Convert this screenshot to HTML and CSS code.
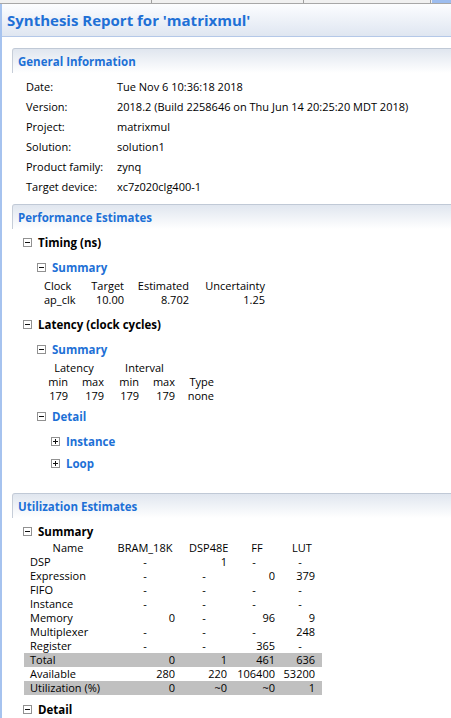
FILE: index.html
```html
<!DOCTYPE html>
<html>
<head>
<meta charset="utf-8">
<link rel="stylesheet" href="styles.css">
</head>
<body>
<div class="tabstrip">
  <span class="tab"></span><span class="tab"></span><span class="tab tab-last"></span><span class="tab-active"></span>
</div>
<div class="page">
  <div class="title">Synthesis Report for 'matrixmul'</div>

  <section class="sec sec-general">
    <div class="sec-head">General Information</div>
    <div class="info">
      <div class="lbl">Date:</div><div>Tue Nov 6 10:36:18 2018</div>
      <div class="lbl">Version:</div><div>2018.2 (Build 2258646 on Thu Jun 14 20:25:20 MDT 2018)</div>
      <div class="lbl">Project:</div><div>matrixmul</div>
      <div class="lbl">Solution:</div><div>solution1</div>
      <div class="lbl">Product family:</div><div>zynq</div>
      <div class="lbl">Target device:</div><div>xc7z020clg400-1</div>
    </div>
  </section>

  <section class="sec sec-perf">
    <div class="sec-head">Performance Estimates</div>
    <div class="node lvl1 first"><span class="tog"></span><span class="nt bold">Timing (ns)</span></div>
    <div class="node lvl2 mt5"><span class="tog"></span><span class="nt blue">Summary</span></div>
    <div class="ttable">
      <div class="l">Clock</div><div>Target</div><div>Estimated</div><div>Uncertainty</div>
      <div class="l">ap_clk</div><div>10.00</div><div>8.702</div><div>1.25</div>
    </div>
    <div class="node lvl1 mt7"><span class="tog"></span><span class="nt bold">Latency (clock cycles)</span></div>
    <div class="node lvl2 mt5"><span class="tog"></span><span class="nt blue">Summary</span></div>
    <div class="ltable">
      <div class="span2 c">Latency</div><div class="span2 c int">Interval</div><div></div>
      <div>min</div><div>max</div><div>min</div><div>max</div><div>Type</div>
      <div>179</div><div>179</div><div>179</div><div>179</div><div>none</div>
    </div>
    <div class="node lvl2 mt3"><span class="tog"></span><span class="nt blue">Detail</span></div>
    <div class="node lvl3 mt5"><span class="tog plus"></span><span class="nt blue">Instance</span></div>
    <div class="node lvl3 mt2"><span class="tog plus"></span><span class="nt blue">Loop</span></div>
  </section>

  <section class="sec sec-util">
    <div class="sec-head">Utilization Estimates</div>
    <div class="node lvl1 first"><span class="tog"></span><span class="nt bold">Summary</span></div>
    <div class="utable">
      <div class="h h1">Name</div><div class="h h2">BRAM_18K</div><div class="h h3">DSP48E</div><div class="h h4">FF</div><div class="h h5">LUT</div>

      <div class="n">DSP</div><div class="d">-</div><div class="v">1</div><div class="d">-</div><div class="d">-</div>
      <div class="n">Expression</div><div class="d">-</div><div class="d">-</div><div class="v">0</div><div class="v">379</div>
      <div class="n">FIFO</div><div class="d">-</div><div class="d">-</div><div class="d">-</div><div class="d">-</div>
      <div class="n">Instance</div><div class="d">-</div><div class="d">-</div><div class="d">-</div><div class="d">-</div>
      <div class="n">Memory</div><div class="v">0</div><div class="d">-</div><div class="v">96</div><div class="v">9</div>
      <div class="n">Multiplexer</div><div class="d">-</div><div class="d">-</div><div class="d">-</div><div class="v">248</div>
      <div class="n">Register</div><div class="d">-</div><div class="d">-</div><div class="v">365</div><div class="d">-</div>

      <div class="n g">Total</div><div class="v g">0</div><div class="v g">1</div><div class="v g">461</div><div class="v g">636</div>
      <div class="n">Available</div><div class="v">280</div><div class="v">220</div><div class="v">106400</div><div class="v">53200</div>
      <div class="n g">Utilization (%)</div><div class="v g">0</div><div class="v g">~0</div><div class="v g">~0</div><div class="v g">1</div>
    </div>
    <div class="node lvl1 mt4"><span class="tog"></span><span class="nt bold">Detail</span></div>
  </section>
</div>
</body>
</html>
```

FILE: styles.css
```css
html, body {
  margin: 0;
  padding: 0;
  background: #ffffff;
  overflow: hidden;
}
body {
  font-family: "Open Sans", "Noto Sans", sans-serif;
  font-size: 11px;
  color: #000;
  height: 718px;
}

.tabstrip {
  display: flex;
  height: 3px;
  background: #f0f0f0;
  border-bottom: 1px solid #a7a7a7;
}
.tab {
  width: 151px;
  border-right: 1px solid #a0a0a0;
  flex: none;
}
.tab-last {
  width: 126px;
}
.tab-active {
  flex: 1;
  background: #9dbdef;
  margin-left: 1px;
}

.page {
  border-left: 2px solid #a6c3ef;
  height: 714px;
}

.title {
  height: 33px;
  box-sizing: border-box;
  border-bottom: 1px solid #b4c8e8;
  background: linear-gradient(#fcfdff, #dfe6f1);
  color: #1f70d6;
  font-weight: bold;
  font-size: 15px;
  padding-left: 5px;
  line-height: 33px;
  margin-bottom: 11px;
}

.sec {
  margin-left: 10px;
}
.sec-perf { margin-top: 8px; }
.sec-util { margin-top: 20px; }

.sec-head {
  height: 25px;
  box-sizing: border-box;
  border-top: 1px solid #c0c9d6;
  border-left: 1px solid #c6cdd8;
  border-top-left-radius: 3px;
  background: linear-gradient(#e0e6ef, #ffffff);
  color: #1d70d6;
  font-weight: bold;
  font-size: 11.5px;
  padding-left: 5px;
  line-height: 25px;
}

.info {
  display: grid;
  grid-template-columns: 91px auto;
  grid-auto-rows: 20px;
  align-items: center;
  padding-left: 14px;
  padding-top: 3px;
}

.node {
  display: flex;
  align-items: center;
  height: 20px;
}
.node.first { margin-top: 3px; }
.lvl1 { padding-left: 11px; }
.lvl2 { padding-left: 25px; }
.lvl3 { padding-left: 39px; }
.mt2 { margin-top: 2px; }
.mt3 { margin-top: 3px; }
.mt4 { margin-top: 4px; }
.mt5 { margin-top: 5px; }
.mt7 { margin-top: 7px; }

.tog {
  position: relative;
  width: 9px;
  height: 9px;
  box-sizing: border-box;
  border: 1px solid #919191;
  background: #fff;
  margin-right: 6px;
  flex: none;
}
.tog::before {
  content: "";
  position: absolute;
  left: 1px;
  right: 1px;
  top: 3px;
  height: 1px;
  background: #111;
}
.tog.plus::after {
  content: "";
  position: absolute;
  top: 1px;
  bottom: 1px;
  left: 3px;
  width: 1px;
  background: #111;
}
.nt { font-size: 11.5px; }
.bold { font-weight: bold; color: #000; }
.blue { font-weight: bold; color: #1d70d6; }

.ttable {
  display: grid;
  grid-template-columns: 36px 44px 65px 76px;
  grid-auto-rows: 14px;
  line-height: 14px;
  margin-top: 2px;
  margin-left: 32px;
  text-align: right;
}
.ttable .l { text-align: left; }

.ltable {
  display: grid;
  grid-template-columns: 24px 36px 35px 36px 39px;
  grid-auto-rows: 14px;
  line-height: 14px;
  margin-top: 2px;
  margin-left: 32px;
  text-align: right;
}
.ltable .span2 { grid-column: span 2; }
.ltable .c { text-align: center; }
.ltable .int { padding-left: 10px; }

.utable {
  display: grid;
  grid-template-columns: 88px 66px 52px 48px 44px;
  grid-auto-rows: 14px;
  line-height: 14px;
  margin-left: 12px;
  width: 298px;
}
.utable .h { text-align: center; white-space: nowrap; }
.utable .h3 { text-align: left; padding-left: 11px; }
.utable .h4 { padding-left: 6px; }
.utable .h5 { padding-left: 4px; }
.utable .n { padding-left: 6px; white-space: nowrap; }
.utable .d { text-align: center; }
.utable .v { text-align: right; padding-right: 3px; }
.utable .v:nth-child(5n) { padding-right: 7px; }
.utable .g { background: #c0c0c0; }
```
